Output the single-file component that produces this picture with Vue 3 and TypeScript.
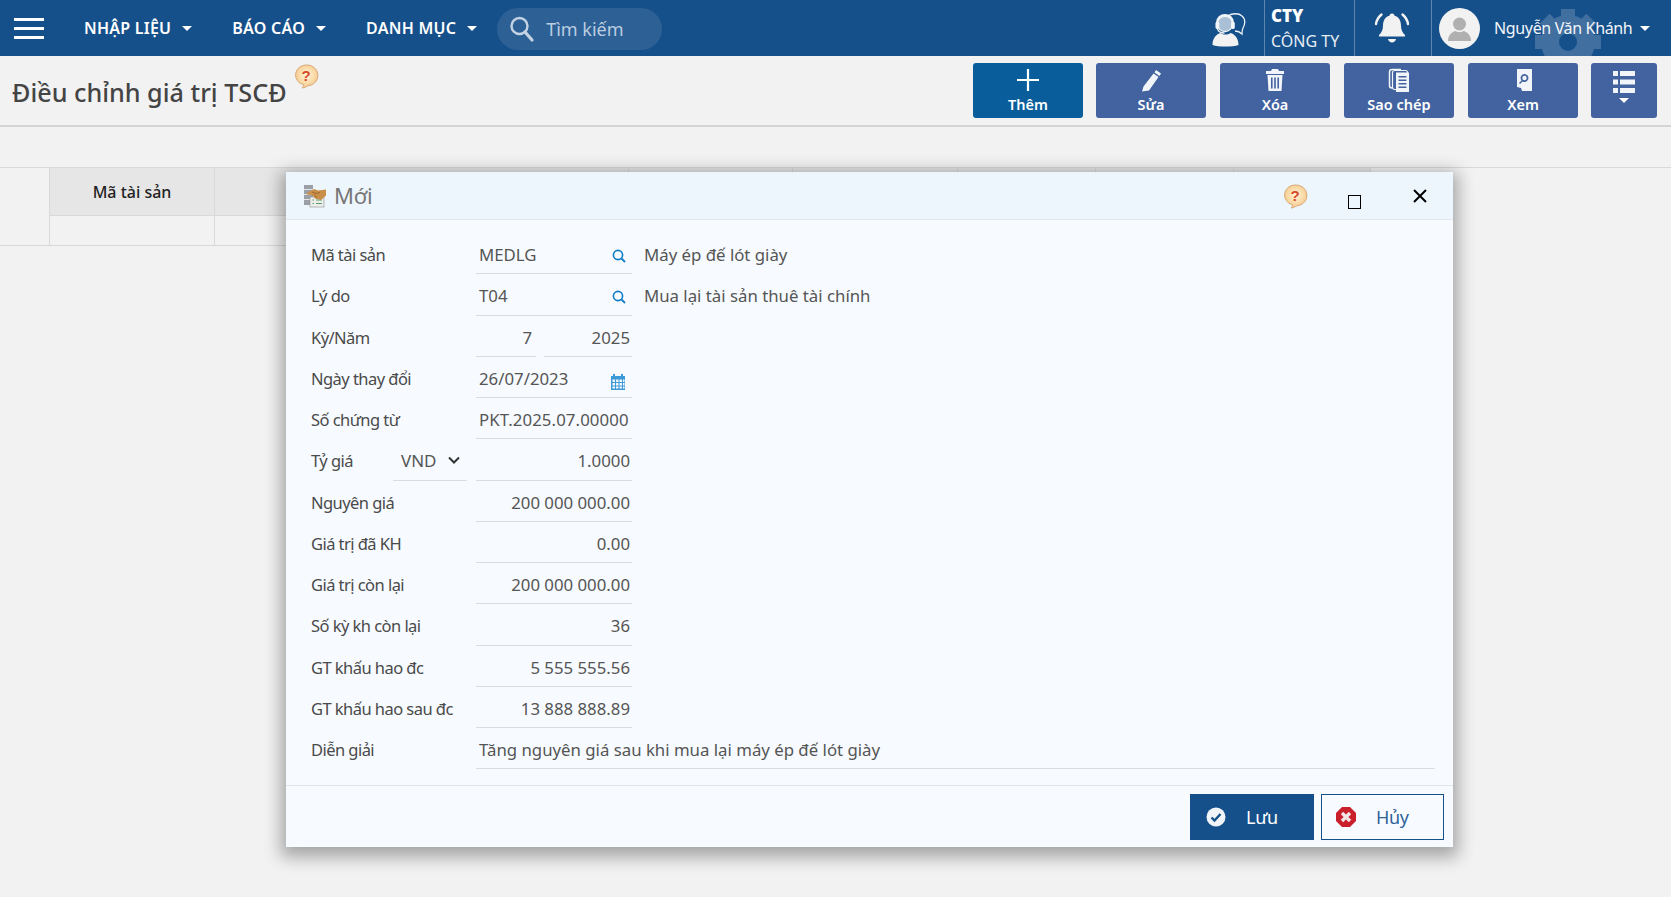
<script setup lang="ts">
interface Row { label: string; value: string; right?: boolean; icon?: 'search' | 'cal'; desc?: string }
const navItems: string[] = ['NHẬP LIỆU', 'BÁO CÁO', 'DANH MỤC']
const rowsTop: Row[] = [
  { label: 'Mã tài sản', value: 'MEDLG', icon: 'search', desc: 'Máy ép đế lót giày' },
  { label: 'Lý do', value: 'T04', icon: 'search', desc: 'Mua lại tài sản thuê tài chính' }
]
const rowsBottom: Row[] = [
  { label: 'Nguyên giá', value: '200 000 000.00', right: true },
  { label: 'Giá trị đã KH', value: '0.00', right: true },
  { label: 'Giá trị còn lại', value: '200 000 000.00', right: true },
  { label: 'Số kỳ kh còn lại', value: '36', right: true },
  { label: 'GT khấu hao đc', value: '5 555 555.56', right: true },
  { label: 'GT khấu hao sau đc', value: '13 888 888.89', right: true }
]
const colWidths: number[] = [50, 165, 414, 164, 165, 138, 138, 137]
const gearTeeth: number[] = [0, 45, 90, 135, 180, 225, 270, 315]
</script>

<template>
  <div class="page">
    <header class="topbar">
      <div class="burger"><i></i><i></i><i></i></div>
      <nav class="nav">
        <span v-for="n in navItems" :key="n" class="nav-item">{{ n }}<b class="caret"></b></span>
      </nav>
      <div class="search">
        <svg width="26" height="28" viewBox="0 0 26 28" fill="none" stroke="#c3d3e3" stroke-width="2.4"><circle cx="10.5" cy="11" r="8"/><path d="M16 17l7 8" stroke-width="3.2" stroke-linecap="round"/></svg>
        <span>Tìm kiếm</span>
      </div>
      <div class="top-right">
        <div class="agent">
          <svg width="36" height="36" viewBox="0 0 36 36" fill="none">
            <path d="M17 5c4-3 11-3 14 0 4 3 3 9 1 12-1 2-1 3-1 6-2-2-4-3-7-3" stroke="#eef2f6" stroke-width="1.3"/>
            <circle cx="14" cy="13" r="7.600" fill="#a9bfd5" stroke="#eef2f6" stroke-width="1.2"/>
            <path d="M6 15v-3c0-5 4-8 8-8s8 3 8 8v3" stroke="#f2f5f8" stroke-width="2.200"/>
            <rect x="4.500" y="11" width="3.800" height="7" rx="1.400" fill="#f2f5f8"/>
            <rect x="20" y="11" width="3.800" height="7" rx="1.400" fill="#f2f5f8"/>
            <path d="M6.500 18c1 3 4 4 7 4" stroke="#eef2f6" stroke-width="1.300"/>
            <path d="M1.500 34c0-7 4-11 8-12 3 2 7 2 10 0 4 1 8 5 8 12-6 2-20 2-26 0z" fill="#f2f2f2"/>
          </svg>
        </div>
        <div class="company"><strong>CTY</strong><span>CÔNG TY</span></div>
        <div class="bell">
          <svg width="36" height="34" viewBox="0 0 36 34" fill="#f2f2f2">
            <path d="M18 2.500c1.600 0 2.500 1 2.500 2.200 4.500 1.200 6.500 5 6.500 10 0 4 1.500 7 4 9.300v1.500H5v-1.500c2.500-2.300 4-5.300 4-9.300 0-5 2-8.800 6.500-10C15.500 3.500 16.400 2.500 18 2.500z"/>
            <path d="M14 28h8c-.5 2-2 3.500-4 3.500s-3.500-1.500-4-3.500z"/>
            <path d="M7.500 3.500C4.500 6 2.600 9 2 13M28.500 3.500c3 2.500 4.900 5.500 5.500 9.500" fill="none" stroke="#f2f2f2" stroke-width="2.400" stroke-linecap="round"/>
          </svg>
        </div>
        <div class="user">
          <svg class="gear" width="68" height="68" viewBox="0 0 68 68" fill="none">
            <circle cx="34" cy="34" r="18" stroke="#416f9f" stroke-width="18"/>
            <rect v-for="a in gearTeeth" :key="a" x="27" y="1" width="14" height="12" fill="#416f9f" :transform="`rotate(${a} 34 34)`"/>
          </svg>
          <span class="avatar">
            <svg width="41" height="41" viewBox="0 0 41 41" fill="#b0b0b0"><circle cx="20.500" cy="16" r="6.500"/><path d="M9 33c0-7 5-9 7-10 3 1.500 6 1.500 9 0 2 1 7 3 7 10z"/></svg>
          </span>
          <span class="uname">Nguyễn Văn Khánh</span>
          <b class="caret small"></b>
        </div>
      </div>
    </header>

    <section class="pagehead">
      <h1>Điều chỉnh giá trị TSCĐ</h1>
      <svg class="help page-help" width="26" height="26" viewBox="0 0 26 26">
        <defs><radialGradient id="hg" cx="50%" cy="45%" r="55%"><stop offset="0" stop-color="#fff6d8"/><stop offset="1" stop-color="#f7c98a"/></radialGradient></defs>
        <path d="M13 2a10.500 10 0 0 1 2 20.800c-2 1-4 2-6 2.200 1-1 1.500-2 1.500-3.300A10.500 10 0 0 1 13 2z" fill="url(#hg)" stroke="#d9a877"/>
        <text x="13" y="18" text-anchor="middle" font-size="15" font-weight="700" fill="#d8492a" font-family="Liberation Sans">?</text>
      </svg>
      <div class="toolbar">
        <button class="tool primary">
          <svg width="24" height="24" viewBox="0 0 24 24" stroke="#fff" stroke-width="2.200"><path d="M12 1v22M1 12h22"/></svg>
          <span>Thêm</span>
        </button>
        <button class="tool">
          <svg width="24" height="24" viewBox="0 0 24 24" fill="#f1f4f8"><path d="M17 2l5 3.500-1.500 2.500-5-3.500zM14.500 5.500l5 3.500L10 22.500l-7 1 1.500-5z"/></svg>
          <span>Sửa</span>
        </button>
        <button class="tool">
          <svg width="24" height="24" viewBox="0 0 24 24" fill="#f1f4f8"><path d="M9 1h6l1 2h5v3H3V3h5zM4.500 7h15l-1 16h-13zM8 9.500v11h1.600v-11zM11.200 9.500v11h1.600v-11zM14.400 9.500v11H16v-11z" fill-rule="evenodd"/></svg>
          <span>Xóa</span>
        </button>
        <button class="tool">
          <svg width="24" height="24" viewBox="0 0 24 24" fill="none"><path d="M5 20c-1.500 0-2.500-1-2.500-2.500V4C2.500 2.500 3.500 1.500 5 1.500h9" stroke="#f1f4f8" stroke-width="1.500"/><rect x="5.500" y="2.500" width="15" height="19" rx="2" stroke="#f1f4f8" stroke-width="1.200"/><path fill-rule="evenodd" clip-rule="evenodd" d="M9 4.500h13v19.500H9zM11.500 8v1.500h8V8zM11.500 11.500V13h8v-1.500zM11.500 15v1.500h8V15zM11.500 18.500V20h8v-1.500z" fill="#f1f4f8"/></svg>
          <span>Sao chép</span>
        </button>
        <button class="tool">
          <svg width="24" height="24" viewBox="0 0 24 24"><path fill-rule="evenodd" d="M6 1h15v22H11l-1-3-4-1zM13.500 6a4 4 0 0 0-3 6.500L8 15l1 1 2.500-2.500A4 4 0 1 0 13.500 6zm0 1.800a2.200 2.200 0 1 1 0 4.400a2.200 2.200 0 0 1 0-4.400z" fill="#f1f4f8"/></svg>
          <span>Xem</span>
        </button>
        <button class="tool menu">
          <svg width="24" height="24" viewBox="0 0 24 24" fill="#f1f4f8"><path d="M1 1h5v5H1zM8 1h15v5H8zM1 9.500h5v5H1zM8 9.500h15v5H8zM1 18h5v5H1zM8 18h15v5H8z"/></svg>
          <b class="caret"></b>
        </button>
      </div>
    </section>

    <section class="grid">
      <div class="grid-row head">
        <div v-for="(w, i) in colWidths" :key="'h' + i" class="cell" :class="{ blank: i === 0 }" :style="{ width: w + 'px' }">{{ i === 1 ? 'Mã tài sản' : '' }}</div>
      </div>
      <div class="grid-row body">
        <div v-for="(w, i) in colWidths" :key="'b' + i" class="cell" :style="{ width: w + 'px' }"></div>
      </div>
    </section>

    <div class="modal">
      <div class="modal-title">
        <svg width="24" height="24" viewBox="0 0 24 24">
          <rect x="1" y="1" width="9" height="20" fill="#9aa0a6"/>
          <path d="M1 5.500h9M1 10.500h9M1 15.500h9" stroke="#e6e6e6"/>
          <rect x="7" y="13" width="14" height="10" fill="#eceeec" stroke="#9a9a9a" stroke-width=".7"/>
          <path d="M9.500 16h1.500M13 16h6M9.500 19.500h1.500M13 19.500h6" stroke="#5d9a68"/>
          <path d="M4 9l7-4 4 1.500 8-1v6l-5 4.500-6-1.500-3-3.500-5-.5z" fill="#c98f49"/>
          <path d="M9 8l4 1.500 4-1M11 11l3 2.500" fill="none" stroke="#8f5f28" stroke-width=".8"/>
        </svg>
        <span class="mtitle">Mới</span>
        <svg class="help" width="26" height="26" viewBox="0 0 26 26">
          <path d="M13 2a10.500 10 0 0 1 2 20.800c-2 1-4 2-6 2.200 1-1 1.500-2 1.500-3.300A10.500 10 0 0 1 13 2z" fill="url(#hg)" stroke="#d9a877"/>
          <text x="13" y="18" text-anchor="middle" font-size="15" font-weight="700" fill="#d8492a" font-family="Liberation Sans">?</text>
        </svg>
        <span class="maxbtn"></span>
        <svg class="closebtn" width="14" height="14" viewBox="0 0 14 14" stroke="#000" stroke-width="2"><path d="M1 1l12 12M13 1L1 13"/></svg>
      </div>

      <div class="form">
        <div v-for="r in rowsTop" :key="r.label" class="row">
          <label>{{ r.label }}</label>
          <div class="field">
            <span>{{ r.value }}</span>
            <svg class="fi" width="14" height="14" viewBox="0 0 14 14" fill="none" stroke="#0f7bc6" stroke-width="1.600"><circle cx="6" cy="6" r="4.600"/><path d="M9.500 9.500l3.500 3.500" stroke-width="1.800"/></svg>
          </div>
          <span class="desc">{{ r.desc }}</span>
        </div>
        <div class="row">
          <label>Kỳ/Năm</label>
          <div class="pair">
            <div class="field right ky">7</div>
            <div class="field right nam">2025</div>
          </div>
        </div>
        <div class="row">
          <label>Ngày thay đổi</label>
          <div class="field">
            <span>26/07/2023</span>
            <svg class="fi" width="16" height="17" viewBox="0 0 16 17"><path fill="#3d9ad8" fill-rule="evenodd" d="M1 3h2V1h2v2h6V1h2v2h2v14H1zM2.500 6.500v2.400H5V6.500zM6 6.500v2.400h2.500V6.500zM9.500 6.500v2.400H12V6.500zM13 6.500v2.400h1.500V6.500zM2.500 10v2.400H5V10zM6 10v2.400h2.500V10zM9.500 10v2.400H12V10zM13 10v2.400h1.500V10zM2.500 13.400v2.200H5v-2.200zM6 13.400v2.200h2.500v-2.200zM9.500 13.400v2.200H12v-2.200zM13 13.400v2.200h1.500v-2.200z"/></svg>
          </div>
        </div>
        <div class="row">
          <label>Số chứng từ</label>
          <div class="field clip"><span>PKT.2025.07.000001</span></div>
        </div>
        <div class="row">
          <label class="short">Tỷ giá</label>
          <div class="select">
            <span>VND</span>
            <svg width="12" height="8" viewBox="0 0 12 8" fill="none" stroke="#333" stroke-width="2"><path d="M1 1.500l5 5 5-5"/></svg>
          </div>
          <div class="field right">1.0000</div>
        </div>
        <div v-for="r in rowsBottom" :key="r.label" class="row">
          <label>{{ r.label }}</label>
          <div class="field right">{{ r.value }}</div>
        </div>
        <div class="row">
          <label>Diễn giải</label>
          <div class="field wide">Tăng nguyên giá sau khi mua lại máy ép đế lót giày</div>
        </div>
      </div>

      <div class="modal-foot">
        <button class="act save">
          <svg width="20" height="20" viewBox="0 0 20 20"><circle cx="10" cy="10" r="9.500" fill="#f1f5f9"/><path d="M5.500 10.500l3 3 6-6.500" fill="none" stroke="#16508a" stroke-width="2.400"/></svg>
          <span>Lưu</span>
        </button>
        <button class="act cancel">
          <svg width="20" height="20" viewBox="0 0 20 20"><path d="M6 0h8l6 6v8l-6 6H6l-6-6V6z" fill="#c9202b"/><path d="M6 6l8 8M14 6l-8 8" stroke="#f3e6e6" stroke-width="3.400"/></svg>
          <span>Hủy</span>
        </button>
      </div>
    </div>
  </div>
</template>

<style>
html, body { margin: 0; background: #f2f2f2; }
</style>

<style scoped>
.page {
  position: relative;
  width: 1671px;
  height: 897px;
  overflow: hidden;
  background: #f2f2f2;
  font-family: "Noto Sans", "Open Sans", sans-serif;
  font-size: 16px;
  color: #555;
}
button { font-family: inherit; border: 0; cursor: pointer; padding: 0; }
.topbar {
  height: 56px;
  background: #16508a;
  display: flex;
  align-items: center;
  color: #fff;
}
.burger { width: 30px; margin-left: 14px; display: flex; flex-direction: column; gap: 6px; }
.burger i { display: block; height: 3px; background: #fff; }
.nav { display: flex; margin-left: 40px; gap: 40px; }
.nav-item { display: flex; align-items: center; font-weight: 600; font-size: 16px; letter-spacing: .25px; }
.caret {
  display: inline-block;
  width: 0; height: 0;
  margin-left: 11px;
  border-left: 5px solid transparent;
  border-right: 5px solid transparent;
  border-top: 5px solid #fff;
}
.search {
  margin-left: 20px;
  width: 165px; height: 42px;
  border-radius: 21px;
  background: #2d6196;
  display: flex; align-items: center;
  gap: 11px; padding-left: 12px;
  box-sizing: border-box;
  color: #bccde0;
  font-size: 18px;
  margin-top: 2px;
}
.top-right { margin-left: auto; display: flex; height: 56px; }
.agent { width: 53px; display: flex; align-items: center; justify-content: flex-start; padding-top: 1px; box-sizing: border-box; }
.company {
  width: 91px; box-sizing: border-box;
  border-left: 1px solid #5d86ae;
  border-right: 1px solid #5d86ae;
  padding: 6px 0 0 6px;
  display: flex; flex-direction: column;
  font-size: 16px;
  color: #e6edf4;
}
.company strong { color: #fff; font-weight: 900; line-height: 20px; font-size: 17px; margin-bottom: 3px; }
.company span { line-height: 24px; }
.bell { width: 77px; display: flex; align-items: center; justify-content: center; border-right: 1px solid #5d86ae; box-sizing: border-box; padding-right: 2px; }
.user { position: relative; width: 239px; height: 56px; overflow: hidden; display: flex; align-items: center; padding-left: 7px; box-sizing: border-box; }
.gear { position: absolute; left: 102px; top: 8px; }
.avatar { position: relative; width: 41px; height: 41px; border-radius: 50%; background: #f2f2f2; overflow: hidden; display: block; }
.avatar svg { display: block; }
.uname { position: relative; margin-left: 14px; font-size: 16px; letter-spacing: -.35px; color: #f2f5f9; }
.caret.small { position: relative; margin-left: 8px; }

.pagehead {
  height: 69px;
  border-bottom: 2px solid #d4d4d4;
  display: flex;
  position: relative;
}
h1 { margin: 22px 0 0 12px; font-size: 25.200px; line-height: 28px; font-weight: 500; color: #444; }
.page-help { margin: 7px 0 0 6px; }
.toolbar { margin-left: auto; padding: 7px 14px 0 0; display: flex; gap: 14px; }
.tool {
  width: 110px; height: 55px;
  background: #42639f; color: #fff;
  border-radius: 3px;
  display: flex; flex-direction: column; align-items: center;
  padding-top: 5px; box-sizing: border-box;
  font-size: 14.500px; font-weight: 600;
}
.tool span { line-height: 20px; margin-top: 2px; }
.tool.primary { background: #0a5d9b; margin-right: -1px; }
.tool.menu { width: 66px; margin-left: -1px; }
.tool.menu svg { margin-top: 2px; }
.tool.menu .caret { margin: 4px 0 0; }

.grid { margin-top: 40px; border-top: 1px solid #d9d9d9; }
.grid-row { display: flex; }
.grid-row.head { height: 47px; }
.grid-row.body { height: 31px; }
.cell {
  box-sizing: border-box;
  border-right: 1px solid #d9d9d9;
  border-bottom: 1px solid #d9d9d9;
  display: flex; align-items: center; justify-content: center;
  color: #222; font-size: 16px; font-weight: 500;
}
.head .cell { background: #e6e6e6; height: 48px; }
.head .cell.blank { background: #f2f2f2; border-bottom: 0; }
.body .cell { height: 31px; }

.modal {
  position: absolute;
  left: 286px; top: 172px;
  width: 1167px; height: 675px;
  background: #f7fbff;
  box-shadow: 0 5px 16px 5px rgba(0,0,0,.32);
  display: flex; flex-direction: column;
}
.modal-title {
  height: 48px; box-sizing: border-box;
  background: #eef6fd;
  border-bottom: 1px solid #dfe6ec;
  display: flex; align-items: center;
  padding-left: 17px;
}
.mtitle { margin: 0 0 2px 7px; font-size: 22px; color: #777; letter-spacing: -.3px; }
.modal-title .help { margin-left: auto; }
.maxbtn { margin: 12px 0 0 40px; width: 11px; height: 12px; border: 1px solid #000; display: block; }
.closebtn { margin: 1px 26px 0 52px; }

.form { padding: 13px 0 0 25px; flex: 1; }
.row { height: 41.25px; display: flex; }
.row label { width: 165px; flex: none; padding-top: 9px; line-height: 26px; font-size: 16.500px; letter-spacing: -.55px; color: #4a4a4a; }
.row label.short { width: 82px; }
.field {
  width: 156px; flex: none;
  box-sizing: border-box;
  border-bottom: 1px solid #d8dde1;
  padding: 10px 2px 0 3px;
  line-height: 24px;
  font-size: 16.800px;
  display: flex; justify-content: space-between;
  white-space: nowrap;
}
.field.right { justify-content: flex-end; }
.field.clip { overflow: hidden; }
.field.clip span { display: block; width: 152px; overflow: hidden; letter-spacing: .1px; }
.field.wide { width: 959px; }
.fi { margin: 6px 4px 0 0; flex: none; }
.desc { margin-left: 12px; padding-top: 10px; line-height: 24px; font-size: 16.800px; }
.pair { display: flex; gap: 8px; width: 156px; }
.field.ky { width: 60px; padding-right: 4px; }
.field.nam { width: 88px; }
.select {
  width: 74px; flex: none; box-sizing: border-box;
  margin-right: 9px;
  border-bottom: 1px solid #d8dde1;
  padding: 10px 7px 0 8px;
  line-height: 24px;
  font-size: 17px;
  display: flex; justify-content: space-between; align-items: flex-start;
}
.select svg { margin-top: 7px; }

.modal-foot {
  height: 62px; box-sizing: border-box;
  border-top: 1px solid #e1e6ea;
  display: flex; justify-content: flex-end;
  padding: 8px 9px 0 0; gap: 7px;
}
.act {
  height: 46px; display: flex; align-items: center;
  font-size: 18px; box-sizing: border-box;
  letter-spacing: -.3px;
}
.act.save { width: 124px; background: #16508a; color: #fff; padding-left: 16px; }
.act.save span { margin-left: 20px; }
.act.cancel { width: 123px; background: #f7fbff; color: #2f6299; border: 1px solid #16508a; padding-left: 14px; }
.act.cancel span { margin-left: 20px; }
</style>
